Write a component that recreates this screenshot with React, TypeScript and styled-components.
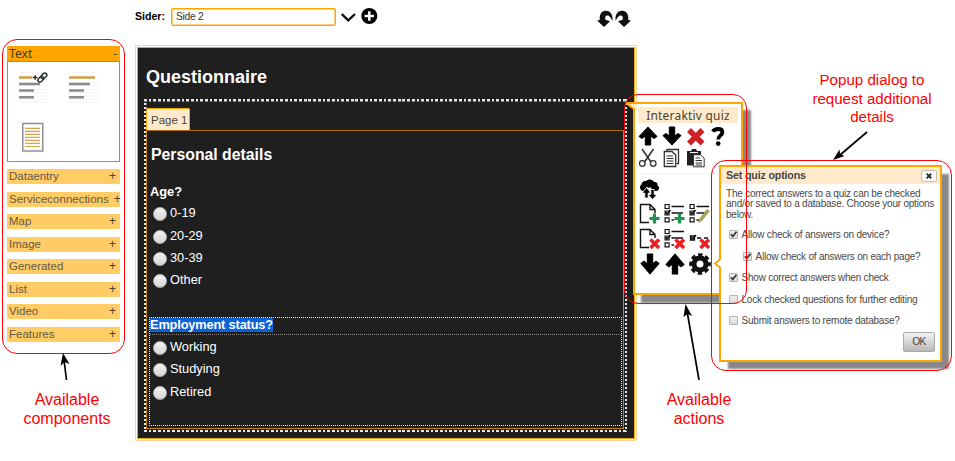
import React from 'react';
import styled, { createGlobalStyle } from 'styled-components';

const Global = createGlobalStyle`
  * { box-sizing: border-box; }
  body { margin: 0; background: #fff; font-family: "Liberation Sans", Arial, sans-serif; overflow: hidden; }
`;

const Page = styled.div`
  position: relative;
  width: 955px;
  height: 461px;
  overflow: hidden;
  display: flex;
`;

/* ---------- component sidebar ---------- */
const Sidebar = styled.aside`
  width: 135px;
  padding: 46px 15px 0 7px;
  display: flex;
  flex-direction: column;
`;
const SectionHeader = styled.div<{ $open?: boolean }>`
  display: flex;
  justify-content: space-between;
  align-items: center;
  flex: none;
  white-space: nowrap;
  height: 15px;
  padding: 0 ${p => (p.$open ? 3 : 4)}px 0 2px;
  margin-bottom: ${p => (p.$open ? 0 : 7.57)}px;
  background: ${p => (p.$open ? '#ffa500' : '#ffcc66')};
  color: ${p => (p.$open ? '#4d3a17' : '#665a45')};
  font: ${p => (p.$open ? '12.2px/15px "Noto Sans"' : '11.5px/15px "Liberation Sans"')}, sans-serif;
`;
const Sign = styled.span`
  margin-left: 5px;
  font-size: 12px;
  color: #4a4233;
`;
const Palette = styled.div`
  height: 101px;
  flex: none;
  margin-bottom: 7px;
  border: 1px solid #8d8d8d;
  padding: 9px 0 0 9px;
  display: grid;
  grid-template-columns: 50px 50px;
  grid-auto-rows: 50px;
`;

/* ---------- editor ---------- */
const Editor = styled.main`
  width: 502px;
  display: flex;
  flex-direction: column;
`;
const TopBar = styled.div`
  height: 45px;
  display: flex;
  align-items: flex-start;
`;
const PageLabel = styled.label`
  width: 35px;
  padding-top: 9px;
  font: bold 10.6px/14px "Liberation Sans", sans-serif;
  white-space: nowrap;
`;
const PageInput = styled.div`
  width: 165px;
  height: 18px;
  margin: 8px 5px 0 1px;
  border: 1px solid #ffa500;
  box-shadow: inset 0 0 0 1px #ffcf7a;
  border-radius: 2px;
  padding-left: 4px;
  font: 10.3px/16px "Liberation Sans", sans-serif;
  letter-spacing: -0.3px;
  color: #333;
`;
const History = styled.div`
  display: flex;
  gap: 2px;
  margin: 10px 0 0 216px;
`;
const TopIcons = styled.svg`
  margin-top: 7px;
`;
const Canvas = styled.div`
  width: 502px;
  height: 396px;
  border: 1px solid #ffd699;
  padding: 1px;
  background: #fff;
`;
const Screen = styled.div`
  height: 392px;
  border: 1px solid #ffa10f;
  background: #1f1f1f;
  color: #fff;
  padding: 18px 7px 0 6px;
`;
const Title = styled.h1`
  margin: 0;
  padding-left: 2px;
  height: 33px;
  font: bold 18px/22px "Liberation Sans", sans-serif;
`;
const dotsX = 'repeating-linear-gradient(90deg, #e6e6e6 0 2.7px, transparent 2.7px 4.7px)';
const dotsY = 'repeating-linear-gradient(180deg, #e6e6e6 0 2.3px, transparent 2.3px 4px)';
const QuizFrame = styled.section`
  height: 333px;
  padding: 9px 3px 3px 2px;
  background:
    ${dotsX} left top / 100% 2.5px no-repeat,
    ${dotsX} left bottom / 100% 2.5px no-repeat,
    ${dotsY} left top / 2.5px 100% no-repeat,
    ${dotsY} right top / 2.5px 100% no-repeat;
`;
const Tab = styled.div`
  width: 44px;
  height: 22px;
  background: #ffebcc;
  border: 1px solid #ffa500;
  border-bottom: 0;
  border-radius: 2px 2px 0 0;
  color: #4d463a;
  font: 11.5px/22px "Liberation Sans", sans-serif;
  padding-left: 4px;
  white-space: nowrap;
`;
const QuizPage = styled.div`
  height: 299px;
  border: 1px solid #c98413;
  border-top-color: #a86d08;
  padding: 14px 1px 0 2px;
`;
const Heading = styled.h2`
  margin: 0 0 17px 2px;
  font: bold 15.8px/20px "Liberation Sans", sans-serif;
`;
const Question = styled.h3`
  margin: 0 0 0 1px;
  height: 20px;
  font: bold 12.8px/20px "Liberation Sans", sans-serif;
`;
const Option = styled.div<{ $inset?: number }>`
  height: 22.4px;
  display: flex;
  align-items: center;
  gap: 3px;
  padding-left: ${p => p.$inset ?? 3}px;
  font: 12.8px/20px "Liberation Sans", sans-serif;
`;
const Radio = styled.span`
  width: 14px;
  height: 14px;
  margin-top: 2px;
  border-radius: 50%;
  border: 1px solid #b5b5b5;
  background: linear-gradient(#f2f2f2, #d6d6d6);
`;
const SelectedBlock = styled.div`
  margin-top: 25px;
  height: 109px;
  border: 1px dotted #eee;
`;
const SelectedTitle = styled.div`
  height: 17px;
  border-bottom: 1px dotted #888;
  font: bold 12.8px/14px "Liberation Sans", sans-serif;
  letter-spacing: -0.16px;
  margin-bottom: 1px;
`;
const Highlight = styled.span`
  display: inline-block;
  height: 14px;
  background: #0b61d8;
`;

/* ---------- floating windows ---------- */
const ActionWindow = styled.div`
  position: absolute;
  left: 633px;
  top: 102px;
  width: 110px;
  height: 193px;
  border: 2px solid #ffa500;
  background: #fff;
  box-shadow: 8px 8px 2px #888;
  padding: 3px 3px 0;
`;
const WindowTitle = styled.div`
  height: 16px;
  background: #ffebcc;
  color: #4a4233;
  text-align: center;
  font: 11.9px/16px "Noto Sans", sans-serif;
  letter-spacing: 0.25px;
`;
const Tools = styled.div<{ $col: number; $row: number; $n: number }>`
  display: grid;
  grid-template-columns: repeat(${p => p.$n}, ${p => p.$col}px);
  grid-auto-rows: ${p => p.$row}px;
`;
const EditTools = styled(Tools)`
  padding: 3px 0 0 0;
  height: 51px;
  border-bottom: 1px solid #fff0d8;
`;
const QuizTools = styled(Tools)`
  padding: 4px 0 0 1px;
`;
const Pointer = styled.svg<{ $x: number; $y: number }>`
  position: absolute;
  left: ${p => p.$x}px;
  top: ${p => p.$y}px;
`;

const Dialog = styled.div`
  position: absolute;
  left: 720px;
  top: 166px;
  width: 221px;
  height: 195px;
  border: 1px solid #ffa500;
  outline: 1px solid #ffa500;
  background: #fff;
  box-shadow: 8px 8px 2px #888;
  color: #484848;
  font: 10px/11px "Liberation Sans", sans-serif;
  letter-spacing: -0.22px;
`;
const DialogBar = styled.div`
  height: 17px;
  display: flex;
  align-items: center;
  justify-content: space-between;
  background: #ffebcc;
  padding: 0 3px 0 5px;
  font-weight: bold;
  font-size: 10.8px;
`;
const Close = styled.button`
  width: 16px;
  height: 12px;
  padding: 0;
  border: 1px solid #c5bfb3;
  border-radius: 2px;
  background: #fbfbfb;
  display: flex;
  align-items: center;
  justify-content: center;
`;
const Message = styled.p`
  margin: 4.5px 0 3px 5px;
  white-space: nowrap;
  line-height: 10.9px;
`;
const Check = styled.div<{ $nested?: boolean }>`
  height: 21.5px;
  padding-left: ${p => (p.$nested ? 22 : 8)}px;
  display: flex;
  align-items: center;
  gap: 3.5px;
  white-space: nowrap;
`;
const CheckBox = styled.span`
  width: 9px;
  height: 9px;
  flex: none;
  border: 1px solid #b4b4b4;
  border-radius: 1px;
  background: linear-gradient(#eee, #ddd);
  display: flex;
`;
const Mark = styled.svg`
  margin: -1px;
`;
const Ok = styled.button`
  display: block;
  width: 32px;
  height: 20px;
  margin: 0 5px 0 auto;
  padding: 0;
  border: 1px solid #aaa;
  border-radius: 2px;
  background: linear-gradient(#f3f3f3, #b9b9b9);
  color: #444;
  font: 10.3px/18px "Liberation Sans", sans-serif;
  letter-spacing: -0.8px;
`;

/* ---------- annotations ---------- */
const Outline = styled.div<{ $x: number; $y: number; $w: number; $h: number; $r: number }>`
  position: absolute;
  left: ${p => p.$x}px;
  top: ${p => p.$y}px;
  width: ${p => p.$w}px;
  height: ${p => p.$h}px;
  border: 1px solid #fb0007;
  border-radius: ${p => p.$r}px;
`;
const Note = styled.div<{ $x: number; $y: number; $w: number; $size: number; $line: number }>`
  position: absolute;
  left: ${p => p.$x}px;
  top: ${p => p.$y}px;
  width: ${p => p.$w}px;
  text-align: center;
  white-space: pre;
  color: #f00;
  font: ${p => p.$size}px/${p => p.$line}px "Liberation Sans", sans-serif;
`;
const Arrows = styled.svg`
  position: absolute;
  left: 0;
  top: 0;
`;

const TextIcon = ({ linked }: { linked?: boolean }) => (
  <svg width="32" height="32" viewBox="0 0 32 32" fill="none">
    <path d="M1 1.5H31M1 11.5H31M1 14.5H31M1 18.5H31M1 21.5H31M1 25H31M1 28H31M1 31H31" stroke="#f4f4f2" />
    <path d={linked ? 'M2 6.5H15.5' : 'M2 6.5H28'} stroke="#d09a38" strokeWidth="2.4" />
    <path d="M2 13H23M2 19.6H17M2 26.3H17" stroke="#8b8b8f" strokeWidth="2.5" />
    {linked && (
      <g stroke="#333" strokeWidth="1.5">
        <path d="M16 6.5h4.5M18.2 4.3v4.5" />
        <rect x="20.5" y="6.3" width="6.5" height="4" rx="2" transform="rotate(-45 23.7 8.2)" />
        <rect x="23.6" y="3" width="6.5" height="4" rx="2" transform="rotate(-45 26.8 4.9)" />
      </g>
    )}
  </svg>
);
const DocIcon = () => (
  <svg width="32" height="32" viewBox="0 0 32 32" fill="none">
    <path d="M1 1H31M1 31H31M1 11H31M1 22H31" stroke="#f4f4f2" />
    <rect x="5.8" y="2.5" width="20" height="27.5" fill="#fff" stroke="#8b8b8b" strokeWidth="1.4" />
    <path d="M8 7.3H23M8 10.3H23M8 13.3H23M8 16.4H23M8 19.4H23M8 22.4H23M8 25.5H23" stroke="#d6a44e" strokeWidth="1.2" />
  </svg>
);

const Curl = ({ flip }: { flip?: boolean }) => (
  <svg width="16" height="17" viewBox="0 0 16 17">
    <path
      transform={flip ? 'translate(16 0) scale(-1 1)' : undefined}
      d="M2.8 10C2 4 5 .8 9 .8C13.5 .8 16.3 5 15.3 11C14 7 12 5.2 10 5.4C8.3 5.6 7.8 7.5 8.5 9.8L13 11.3L7 17L0 10.5Z"
      fill="#111"
    />
  </svg>
);

const Box = ({ children }: { children: React.ReactNode }) => (
  <svg width="24" height="24" viewBox="0 0 24 24" fill="none">{children}</svg>
);
const ARROW_UP = 'M10 1L19 10.5L16 12.5L12.7 10V19H7.3V10L4 12.5L1 10.5Z';
const UpIcon = ({ tall }: { tall?: boolean }) => (
  <Box>
    <path d={ARROW_UP} transform={tall ? 'translate(1 0) scale(1 1.1)' : undefined} fill="#000" stroke="#000" strokeLinejoin="round" />
  </Box>
);
const DownIcon = ({ tall }: { tall?: boolean }) => (
  <Box>
    <path d={ARROW_UP} transform={tall ? 'translate(1 22) scale(1 -1.1)' : 'translate(0 20) scale(1 -1)'} fill="#000" stroke="#000" strokeLinejoin="round" />
  </Box>
);
const DeleteIcon = () => (
  <Box><path d="M3 4L16.5 17.5M16.5 4L3 17.5" stroke="#cb2127" strokeWidth="5.5" /></Box>
);
const HelpIcon = () => (
  <Box>
    <path d="M3 5.6C4.5 2.4 12.4 1.6 12.4 6.4C12.4 9.4 8.2 9.2 8.2 13.4" stroke="#000" strokeWidth="3.8" />
    <circle cx="8.2" cy="17.6" r="2.3" fill="#000" />
  </Box>
);
const CutIcon = () => (
  <Box>
    <path d="M4 1L13 14M15.5 1L6.5 14" stroke="#333" strokeWidth="1.6" />
    <circle cx="4.3" cy="15.5" r="2.8" stroke="#333" strokeWidth="1.3" />
    <circle cx="15.2" cy="15.5" r="2.8" stroke="#333" strokeWidth="1.3" />
  </Box>
);
const CopyIcon = () => (
  <Box>
    <path d="M5 3V1.5H16.5V15.5H14.5" stroke="#333" strokeWidth="1.3" />
    <path d="M2.3 3.5H10L13.7 7V18.5H2.3Z" stroke="#333" strokeWidth="1.3" fill="#fff" />
    <path d="M4.5 8H11M4.5 10.5H11.5M4.5 13H11.5M4.5 15.5H11.5" stroke="#333" />
  </Box>
);
const PasteIcon = () => (
  <Box>
    <path d="M1 3H5L6 1H10L11 3H15V17.5H1Z" fill="#222" />
    <path d="M4 4.5H12" stroke="#fff" />
    <path d="M7.5 6.8H14.5L18.2 10.2V18.8H7.5Z" fill="#fff" stroke="#333" />
    <path d="M9.5 10H14M9.5 12.5H16M9.5 15H16M9.5 17H16" stroke="#333" />
  </Box>
);
const CloudIcon = () => (
  <Box>
    <path d="M4.5 13C1 13 -0.2 8.5 2.5 6.6C2.5 4 5 2.5 7 3C9 0.5 14 1 15 4C18 3.6 19 6 18.3 7.6C21.5 9 20 13.2 17 13H15L11 9L10 10L8 9Z" fill="#000" />
    <path d="M7.5 9.5L3 15H5.8V20H9.2V15H12Z M13.5 21.5L9 16.5H11.8V11.5H15.2V16.5H18Z" fill="#000" stroke="#fff" strokeWidth=".8" />
  </Box>
);
const Plus = () => <path d="M15.5 10.5V20.5M10.5 15.5H20.5" stroke="#21924b" strokeWidth="3.2" />;
const Cross = () => <path d="M11.5 11.5L20 20M20 11.5L11.5 20" stroke="#ee2025" strokeWidth="3.6" />;
const Sheet = () => (
  <path d="M10 19.5H1.5V1.5H11L16 6.5V10M11 1.5V6.5H16" stroke="#111" strokeWidth="1.4" />
);
const Rows = () => (
  <g stroke="#111" strokeWidth="1.2">
    <path d="M1.1 1.5h4v4h-4zM1.1 8h4v4h-4zM1.1 14.8h4v4h-4z" />
    <path d="M7.5 3.5H20M7.5 10H19M7.5 17H10" strokeWidth="1.4" />
    <path d="M1.5 9L3 11L6.5 7" strokeWidth="1.7" />
  </g>
);
const GearIcon = () => (
  <Box>
    <circle cx="11" cy="11" r="6" stroke="#111" strokeWidth="5" />
    <circle cx="11" cy="11" r="9" stroke="#111" strokeWidth="3.6" strokeDasharray="4.3 2.769" strokeDashoffset="2.15" />
  </Box>
);
const CheckMark = () => (
  <Mark width="9" height="9" viewBox="0 0 9 9">
    <path d="M2 4.3L3.8 6.5L7.4 1.8" fill="none" stroke="#333" strokeWidth="1.7" />
  </Mark>
);

const sections = ['Dataentry', 'Serviceconnections', 'Map', 'Image', 'Generated', 'List', 'Video', 'Features'];
const ages = ['0-19', '20-29', '30-39', 'Other'];
const statuses = ['Working', 'Studying', 'Retired'];
const options = [
  { label: 'Allow check of answers on device?', on: true },
  { label: 'Allow check of answers on each page?', on: true, nested: true },
  { label: 'Show correct answers when check', on: true },
  { label: 'Lock checked questions for further editing', on: false },
  { label: 'Submit answers to remote database?', on: false },
];

export default function App() {
  return (
    <Page>
      <Global />
      <Sidebar>
        <SectionHeader $open><span>Text</span><Sign>-</Sign></SectionHeader>
        <Palette><TextIcon linked /><TextIcon /><DocIcon /></Palette>
        {sections.map(s => <SectionHeader key={s}><span>{s}</span><Sign>+</Sign></SectionHeader>)}
      </Sidebar>

      <Editor>
        <TopBar>
          <PageLabel>Sider:</PageLabel>
          <PageInput>Side 2</PageInput>
          <TopIcons width="40" height="20" viewBox="0 0 40 20" fill="none">
            <path d="M.7 7L7.3 13.3L14 7" stroke="#111" strokeWidth="2.4" />
            <circle cx="28.3" cy="9" r="8" fill="#000" />
            <path d="M28.3 4.3V13.7M23.6 9H33" stroke="#fff" strokeWidth="2.5" />
          </TopIcons>
          <History><Curl /><Curl flip /></History>
        </TopBar>
        <Canvas>
          <Screen>
            <Title>Questionnaire</Title>
            <QuizFrame>
              <Tab>Page 1</Tab>
              <QuizPage>
                <Heading>Personal details</Heading>
                <Question>Age?</Question>
                {ages.map(a => <Option key={a} $inset={4}><Radio />{a}</Option>)}
                <SelectedBlock>
                  <SelectedTitle><Highlight>Employment status?</Highlight></SelectedTitle>
                  {statuses.map(s => <Option key={s}><Radio />{s}</Option>)}
                </SelectedBlock>
              </QuizPage>
            </QuizFrame>
          </Screen>
        </Canvas>
      </Editor>

      <ActionWindow>
        <WindowTitle>Interaktiv quiz</WindowTitle>
        <EditTools $n={4} $col={24} $row={22}>
          <UpIcon /><DownIcon /><DeleteIcon /><HelpIcon />
          <CutIcon /><CopyIcon /><PasteIcon />
        </EditTools>
        <QuizTools $n={3} $col={25} $row={25}>
          <CloudIcon /><i /><i />
          <Box><Sheet /><Plus /></Box><Box><Rows /><Plus /></Box>
          <Box><Rows /><path d="M9 20L10 16L18 6L21 8L13 18Z" fill="#a9a45c" /></Box>
          <Box><Sheet /><Cross /></Box><Box><Rows /><Cross /></Box>
          <Box><path d="M1.5 8h4v4h-4zM8 10h4M15 10h4" stroke="#111" strokeWidth="1.3" /><path d="M2 9L3.5 11L7 7" stroke="#111" strokeWidth="1.6" /><Cross /></Box>
          <DownIcon tall /><UpIcon tall /><GearIcon />
        </QuizTools>
      </ActionWindow>
      <Pointer $x={625} $y={101} width="12" height="10" viewBox="0 0 12 10">
        <path d="M1 2H12V9H9.5Z" fill="#ffebcc" /><path d="M12 2H1L9 8V10" fill="none" stroke="#ffa500" strokeWidth="1.8" />
      </Pointer>

      <Dialog>
        <DialogBar>
          <span>Set quiz options</span>
          <Close aria-label="Close"><svg width="6" height="6" viewBox="0 0 6 6"><path d="M.7 .7L5.3 5.3M5.3 .7L.7 5.3" stroke="#222" strokeWidth="1.7" /></svg></Close>
        </DialogBar>
        <Message>The correct answers to a quiz can be checked<br />and/or saved to a database. Choose your options<br />below.</Message>
        {options.map(o => (
          <Check key={o.label} $nested={o.nested}><CheckBox>{o.on && <CheckMark />}</CheckBox>{o.label}</Check>
        ))}
        <Ok>OK</Ok>
      </Dialog>
      <Pointer $x={713} $y={256} width="10" height="14" viewBox="0 0 10 14">
        <path d="M10 2.5L8 3L2 7.5L8 12H10Z" fill="#fff" /><path d="M7 1V3.5L2 7.5L7 11.5V13" fill="none" stroke="#ffa500" strokeWidth="1.8" />
      </Pointer>

      <Outline $x={2} $y={39} $w={123} $h={315} $r={15} />
      <Outline $x={624} $y={94} $w={123} $h={210} $r={14} />
      <Outline $x={711} $y={160} $w={241} $h={211} $r={15} />
      <Note $x={7} $y={390} $w={120} $size={16} $line={19}>{'Available\ncomponents'}</Note>
      <Note $x={639} $y={390} $w={120} $size={16} $line={19}>{'Available\nactions'}</Note>
      <Note $x={792} $y={71} $w={160} $size={15.1} $line={18.5}>{'Popup dialog to\nrequest additional\ndetails'}</Note>
      <Arrows width="955" height="461" viewBox="0 0 955 461">
        <g stroke="#000" strokeWidth="1.7">
          <path d="M66.5 380L64 360M699 380L687 311M867 132L840 155" />
        </g>
        <path d="M63 353L69.5 364L64.5 362L60.5 366ZM685.5 304L692 316L687.5 314L683.5 317ZM833 160L839.5 149.5L840 154L844.5 156Z" fill="#000" />
      </Arrows>
    </Page>
  );
}
